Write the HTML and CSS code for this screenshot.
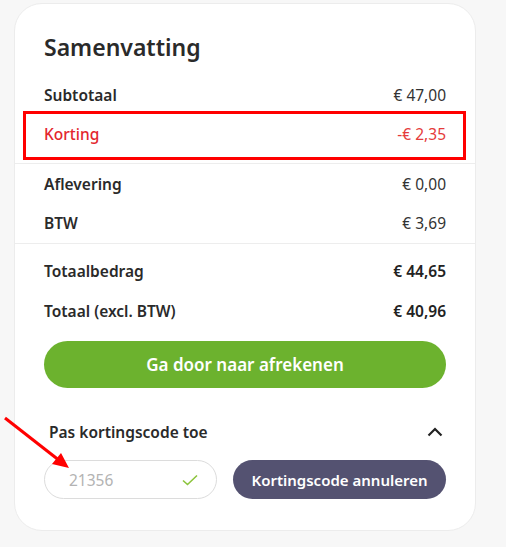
FILE: index.html
```html
<!DOCTYPE html>
<html lang="nl">
<head>
<meta charset="utf-8">
<link rel="stylesheet" href="styles.css">
</head>
<body>
<div class="card">
  <h2 class="title">Samenvatting</h2>
  <div class="section sec-first">
    <div class="row"><span class="label">Subtotaal</span><span class="val">€ 47,00</span></div>
    <div class="row discount"><span class="label">Korting</span><span class="val">-€ 2,35</span></div>
  </div>
  <div class="section sec-mid">
    <div class="row"><span class="label">Aflevering</span><span class="val">€ 0,00</span></div>
    <div class="row"><span class="label">BTW</span><span class="val">€ 3,69</span></div>
  </div>
  <div class="section sec-totals">
    <div class="row total"><span class="label">Totaalbedrag</span><span class="val">€ 44,65</span></div>
    <div class="row total"><span class="label">Totaal (excl. BTW)</span><span class="val">€ 40,96</span></div>
    <button class="checkout">Ga door naar afrekenen</button>
    <div class="coupon-head">
      <span>Pas kortingscode toe</span>
      <svg class="chev" width="16" height="10" viewBox="0 0 16 10"><path d="M1.5 8.5 L8 2 L14.5 8.5" fill="none" stroke="#222" stroke-width="2.2"/></svg>
    </div>
    <div class="coupon-row">
      <div class="code-input">
        <span class="code">21356</span>
        <svg class="check" width="16" height="12" viewBox="0 0 16 12"><path d="M1 6.5 L5.5 10.5 L15 1.5" fill="none" stroke="#8cc43c" stroke-width="1.6"/></svg>
      </div>
      <button class="cancel">Kortingscode annuleren</button>
    </div>
  </div>
</div>
<div class="highlight"></div>
<svg class="arrow" width="80" height="80" viewBox="0 0 80 80">
  <line x1="5" y1="418" x2="60" y2="461" stroke="#f00" stroke-width="3" transform="translate(0,-400)"/>
  <polygon points="69,468 52,464 61,453" fill="#f00" transform="translate(0,-400)"/>
</svg>
</body>
</html>
```
FILE: styles.css
```css
html, body {
  margin: 0;
  padding: 0;
  background: #f7f7f7;
}
body {
  position: relative;
  width: 506px;
  height: 547px;
  overflow: hidden;
  font-family: "Noto Sans", "Open Sans", sans-serif;
  color: #2a2a2a;
}
.card {
  margin: 3px 0 0 14px;
  width: 462px;
  height: 528px;
  box-sizing: border-box;
  background: #fff;
  border: 1px solid #ececec;
  border-radius: 28px;
}
.title {
  margin: 0;
  padding: 27px 29px 0;
  font-size: 23px;
  line-height: 32px;
  font-weight: 600;
  color: #2a2a2a;
}
.section {
  padding: 0 29px;
}
.sec-first {
  padding-top: 12px;
  padding-bottom: 10px;
  border-bottom: 1px solid #ededed;
}
.sec-mid {
  padding-bottom: 1px;
  border-bottom: 1px solid #ededed;
}
.sec-totals {
  padding-top: 7px;
}
.row {
  display: flex;
  justify-content: space-between;
  align-items: center;
  height: 39px;
  font-size: 15.5px;
}
.row .label {
  font-weight: 600;
  color: #2a2a2a;
}
.row .val {
  font-weight: 400;
  color: #333;
}
.row.discount .label {
  color: #e3262e;
  font-weight: 500;
}
.row.discount .val {
  color: #e53b3b;
}
.row.total {
  height: 40px;
}
.row.total .val {
  font-weight: 600;
  color: #222;
}
.checkout {
  display: block;
  width: 100%;
  height: 47px;
  margin-top: 10px;
  border: none;
  border-radius: 24px;
  background: #6cb22e;
  color: #fff;
  font-family: inherit;
  font-size: 17px;
  font-weight: 600;
}
.coupon-head {
  display: flex;
  justify-content: space-between;
  align-items: center;
  margin-top: 31px;
  padding: 0 3px 0 5px;
  height: 26px;
  font-size: 15.5px;
  font-weight: 600;
  color: #2a2a2a;
}
.coupon-row {
  display: flex;
  gap: 16px;
  margin-top: 15px;
}
.code-input {
  display: flex;
  align-items: center;
  justify-content: space-between;
  width: 173px;
  height: 39px;
  box-sizing: border-box;
  border: 1px solid #dcdcdc;
  border-radius: 20px;
  padding: 0 18px 0 24px;
}
.code {
  font-size: 15.5px;
  color: #b3b3b3;
}
.cancel {
  flex: 1;
  height: 39px;
  border: none;
  border-radius: 20px;
  background: #545271;
  color: #fff;
  font-family: inherit;
  font-size: 15px;
  font-weight: 600;
}
.highlight {
  position: absolute;
  left: 23px;
  top: 111px;
  width: 443px;
  height: 49px;
  box-sizing: border-box;
  border: 3px solid #ff0000;
}
.arrow {
  position: absolute;
  left: 0;
  top: 400px;
}
```
